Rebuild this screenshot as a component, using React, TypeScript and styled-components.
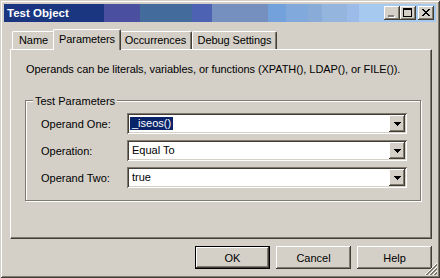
import * as React from 'react'
import styled, { createGlobalStyle } from 'styled-components'

const Theme = {
  colors: {
    face: '#d4d0c8',
    light: '#ffffff',
    shadow: '#7e7a6e',
    dark: '#423e35',
    select: '#0a246a',
    text: '#000000',
  },
  fonts: {
    body: `'Liberation Sans', Arial, sans-serif`,
  },
}

const raised = `
  box-shadow: inset -1px -1px 0 ${Theme.colors.dark}, inset 1px 1px 0 ${Theme.colors.light},
    inset -2px -2px 0 ${Theme.colors.shadow}, inset 2px 2px 0 ${Theme.colors.face};
`

const GlobalStyle = createGlobalStyle`
  html, body { margin: 0; padding: 0; background: ${Theme.colors.face}; }
  body { font-family: ${Theme.fonts.body}; font-size: 11px; color: ${Theme.colors.text}; }
`

const tabs = [
  { name: 'Name', w: 43 },
  { name: 'Parameters', w: 64 },
  { name: 'Occurrences', w: 73 },
  { name: 'Debug Settings', w: 85 },
]

const fields = [
  { label: 'Operand One:', value: '_iseos()', selected: true },
  { label: 'Operation:', value: 'Equal To', selected: false },
  { label: 'Operand Two:', value: 'true', selected: false },
]

const Arrow = () => (
  <svg width="7" height="4" viewBox="0 0 7 4">
    {[0, 1, 2, 3].map(i => <rect key={i} x={i} y={i} width={7 - 2 * i} height="1" fill="#000" />)}
  </svg>
)

const MinIcon = () => (
  <svg width="16" height="14" viewBox="0 0 16 14">
    <rect x="5" y="10" width="6" height="2" fill="#fff" />
    <rect x="4" y="9" width="6" height="2" fill="#808080" />
  </svg>
)

const MaxIcon = () => (
  <svg width="16" height="14" viewBox="0 0 16 14">
    <path d="M3 2h9v9H3z M4 4h7v6H4z" fillRule="evenodd" fill="#000" />
  </svg>
)

const CloseIcon = () => (
  <svg width="16" height="14" viewBox="0 0 16 14">
    {[0, 1, 2, 3, 4, 5, 6].map(i => (
      <React.Fragment key={i}>
        <rect x={4 + i} y={3 + i} width="2" height="1" fill="#000" />
        <rect x={10 - i} y={3 + i} width="2" height="1" fill="#000" />
      </React.Fragment>
    ))}
  </svg>
)

const Grip = () => {
  const lines: Array<{ c: number; color: string }> = [
    { c: 11, color: '#fff' }, { c: 12, color: Theme.colors.shadow }, { c: 13, color: Theme.colors.shadow },
    { c: 15, color: '#fff' }, { c: 16, color: Theme.colors.shadow }, { c: 17, color: Theme.colors.shadow },
    { c: 19, color: '#fff' }, { c: 20, color: Theme.colors.shadow }, { c: 21, color: Theme.colors.shadow },
  ]
  return (
    <GripBox width="12" height="12" viewBox="0 0 12 12">
      {lines.map(l =>
        Array.from({ length: 12 }).map((_, x) => {
          const y = l.c - x
          return y >= 0 && y < 12 ? <rect key={`${l.c}-${x}`} x={x} y={y} width="1" height="1" fill={l.color} /> : null
        })
      )}
    </GripBox>
  )
}

const App = () => (
  <>
    <GlobalStyle />
    <Window>
      <TitleBar>
        <Title>Test Object</Title>
        <CaptionButton><MinIcon /></CaptionButton>
        <CaptionButton><MaxIcon /></CaptionButton>
        <CaptionButton $gap><CloseIcon /></CaptionButton>
      </TitleBar>
      <Body>
        <TabStrip>
          {tabs.map(t => (
            <Tab key={t.name} $w={t.w} $active={t.name === 'Parameters'}>{t.name}</Tab>
          ))}
        </TabStrip>
        <Panel>
          <Description>Operands can be literals, variables, or functions (XPATH(), LDAP(), or FILE()).</Description>
          <GroupBox>
            <GroupCaption>Test Parameters</GroupCaption>
            {fields.map(f => (
              <React.Fragment key={f.label}>
                <FieldLabel>{f.label}</FieldLabel>
                <Combo>
                  <ComboText><Value $selected={f.selected}>{f.value}</Value></ComboText>
                  <DropButton><Arrow /></DropButton>
                </Combo>
              </React.Fragment>
            ))}
          </GroupBox>
        </Panel>
        <ButtonRow>
          <PushButton $default>OK</PushButton>
          <PushButton>Cancel</PushButton>
          <PushButton>Help</PushButton>
        </ButtonRow>
      </Body>
      <Grip />
    </Window>
  </>
)

const Window = styled.div`
  position: relative;
  width: 440px;
  height: 278px;
  box-sizing: border-box;
  padding: 4px;
  display: flex;
  flex-direction: column;
  background: ${Theme.colors.face};
  box-shadow: inset 1px 1px 0 ${Theme.colors.face}, inset -1px -1px 0 ${Theme.colors.dark},
    inset 2px 2px 0 ${Theme.colors.light}, inset -2px -2px 0 ${Theme.colors.shadow};
`

const TitleBar = styled.div`
  height: 18px;
  box-sizing: border-box;
  padding: 1px 2px 2px 2px;
  display: flex;
  align-items: center;
  background: linear-gradient(90deg,
    #1a3680 0px, #1a3680 100px,
    #4a4fa0 100px, #4a4fa0 136px,
    #436c9c 136px, #436c9c 188px,
    #4d62b2 188px, #4d62b2 208px,
    #7590be 208px, #7590be 264px,
    #73a1dc 264px, #73a1dc 282px,
    #82a9dc 282px, #82a9dc 304px,
    #88abd8 304px, #88abd8 318px,
    #94b5de 318px, #94b5de 343px,
    #9cbbe8 343px, #9cbbe8 355px,
    #a6c9f0 355px);
`

const Title = styled.div`
  flex: 1;
  margin-left: 1px;
  color: #fff;
  font-weight: bold;
  font-size: 11.5px;
  line-height: 14px;
`

const CaptionButton = styled.div<{ $gap?: boolean }>`
  width: 16px;
  height: 14px;
  margin-left: ${p => (p.$gap ? 2 : 0)}px;
  background: ${Theme.colors.face};
  ${raised}
  svg { display: block; }
`

const Body = styled.div`
  flex: 1;
  display: flex;
  flex-direction: column;
  padding: 7px 4px 5px 6px;
  min-height: 0;
`

const TabStrip = styled.div`
  display: flex;
  align-items: flex-end;
  height: 20px;
  padding-left: 2px;
  position: relative;
  z-index: 1;
`

const Tab = styled.div<{ $w: number; $active?: boolean }>`
  box-sizing: border-box;
  width: ${p => (p.$active ? p.$w + 4 : p.$w)}px;
  height: ${p => (p.$active ? 21 : 18)}px;
  margin: ${p => (p.$active ? '0 -2px -1px' : '0')};
  padding-bottom: ${p => (p.$active ? 3 : 1)}px;
  position: relative;
  z-index: ${p => (p.$active ? 2 : 1)};
  display: flex;
  align-items: center;
  justify-content: center;
  background: ${Theme.colors.face};
  border-top: 1px solid ${Theme.colors.light};
  border-left: 1px solid ${Theme.colors.light};
  border-right: 1px solid ${Theme.colors.dark};
  border-radius: 2px 2px 0 0;
  box-shadow: inset -1px 0 0 ${Theme.colors.shadow};
  white-space: nowrap;
  letter-spacing: -0.1px;
`

const Panel = styled.div`
  flex: 1;
  box-sizing: border-box;
  padding: 13px 10px 0 14px;
  border-top: 1px solid ${Theme.colors.light};
  border-left: 1px solid ${Theme.colors.light};
  border-right: 1px solid ${Theme.colors.dark};
  border-bottom: 1px solid ${Theme.colors.dark};
  box-shadow: inset -1px -1px 0 ${Theme.colors.shadow};
`

const Description = styled.p`
  margin: 0 0 0 1px;
  line-height: 13px;
  white-space: nowrap;
  letter-spacing: -0.07px;
`

const GroupBox = styled.div`
  position: relative;
  margin-top: 24px;
  padding: 12px 13px 12px 15px;
  border: 1px solid ${Theme.colors.shadow};
  box-shadow: inset 1px 1px 0 ${Theme.colors.light}, 1px 1px 0 ${Theme.colors.light};
  display: grid;
  grid-template-columns: 86px 1fr;
  row-gap: 6px;
  align-items: center;
`

const GroupCaption = styled.span`
  position: absolute;
  top: -6px;
  left: 7px;
  padding: 0 2px;
  line-height: 13px;
  background: ${Theme.colors.face};
`

const FieldLabel = styled.span`
  line-height: 13px;
  padding-top: 1px;
`

const Combo = styled.div`
  height: 21px;
  box-sizing: border-box;
  padding: 2px;
  display: flex;
  background: #fff;
  box-shadow: inset 1px 1px 0 ${Theme.colors.shadow}, inset -1px -1px 0 ${Theme.colors.light},
    inset 2px 2px 0 ${Theme.colors.dark}, inset -2px -2px 0 ${Theme.colors.face};
`

const ComboText = styled.div`
  flex: 1;
  display: flex;
  align-items: center;
  padding-left: 1px;
`

const Value = styled.span<{ $selected?: boolean }>`
  line-height: 13px;
  padding: 0 2px;
  background: ${p => (p.$selected ? Theme.colors.select : 'transparent')};
  color: ${p => (p.$selected ? '#fff' : Theme.colors.text)};
`

const DropButton = styled.div`
  width: 16px;
  display: flex;
  align-items: center;
  justify-content: center;
  background: ${Theme.colors.face};
  ${raised}
`

const ButtonRow = styled.div`
  display: flex;
  justify-content: flex-end;
  gap: 6px;
  margin-top: 7px;
`

const PushButton = styled.button<{ $default?: boolean }>`
  width: 75px;
  height: 23px;
  padding: 0;
  border: none;
  font-family: ${Theme.fonts.body};
  font-size: 11px;
  color: ${Theme.colors.text};
  background: ${Theme.colors.face};
  box-shadow: ${p =>
    p.$default
      ? `inset 0 0 0 1px #000, inset -2px -2px 0 ${Theme.colors.dark}, inset 2px 2px 0 ${Theme.colors.light}, inset -3px -3px 0 ${Theme.colors.shadow}`
      : `inset -1px -1px 0 ${Theme.colors.dark}, inset 1px 1px 0 ${Theme.colors.light}, inset -2px -2px 0 ${Theme.colors.shadow}`};
`

const GripBox = styled.svg`
  position: absolute;
  right: 3px;
  bottom: 3px;
`

export default App
